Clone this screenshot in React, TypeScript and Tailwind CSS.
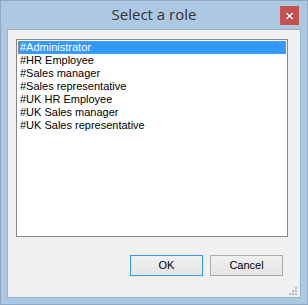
import { useState } from 'react';

const roles = [
  '#Administrator',
  '#HR Employee',
  '#Sales manager',
  '#Sales representative',
  '#UK HR Employee',
  '#UK Sales manager',
  '#UK Sales representative',
];

function SizeGrip() {
  // 3 rows of little square dots, stepped like a staircase
  const dots = [
    [6, 0],
    [3, 3],
    [6, 3],
    [0, 6],
    [3, 6],
    [6, 6],
  ];
  return (
    <svg width="9" height="9" viewBox="0 0 9 9" className="absolute right-[2px] bottom-[1px]">
      {dots.map(([x, y]) => (
        <rect key={`${x}-${y}`} x={x} y={y} width="2" height="2" fill="#b8b8b8" />
      ))}
    </svg>
  );
}

export default function App() {
  const [selected, setSelected] = useState(0);

  return (
    <div className="w-[308px] h-[305px] border border-[#8fa7c1] bg-[#adc8e2] flex flex-col">
      <div className="h-[28px] relative flex items-center justify-center">
        <span className="text-[15px] text-[#333333] leading-none -mt-[2px]" style={{ fontFamily: '"Open Sans", "Noto Sans", sans-serif' }}>
          Select a role
        </span>
        <button className="absolute right-[8px] top-[5px] w-[19px] h-[19px] bg-[#c75050] flex items-center justify-center">
          <svg width="7" height="6" viewBox="0 0 7 6">
            <path d="M0 0h2v1h1v1h1v-1h1v-1h2v1h-1v1h-1v2h1v1h1v1h-2v-1h-1v-1h-1v1h-1v1h-2v-1h1v-1h1v-2h-1v-1h-1z" fill="#fff" />
          </svg>
        </button>
      </div>
      <div className="mx-[6px] h-[269px] border border-[#9ab1cb] bg-[#f0f0f0] relative flex flex-col pt-[9px] px-[8px]">
        <div className="w-[272px] h-[198px] border border-[#828790] bg-white p-px">
          {roles.map((role, i) => (
            <div
              key={role}
              onClick={() => setSelected(i)}
              className={`h-[13px] pl-[2px] text-[11px] leading-[13px] whitespace-nowrap ${
                i === selected
                  ? 'bg-[#3399ff] text-white outline-1 outline-dotted outline-[#d9822b] -outline-offset-1'
                  : 'text-black'
              }`}
              style={{ fontFamily: '"Liberation Sans", Arial, sans-serif' }}
            >
              {role}
            </div>
          ))}
        </div>
        <div className="flex justify-end gap-[7px] mt-[18px] pr-[9px]">
          <button
            className="w-[73px] h-[21px] border border-[#3399ff] bg-gradient-to-b from-[#f0f0f0] to-[#e5e5e5] text-[11px] text-black"
            style={{ fontFamily: '"Liberation Sans", Arial, sans-serif' }}
          >
            OK
          </button>
          <button
            className="w-[73px] h-[21px] border border-[#acacac] bg-gradient-to-b from-[#f0f0f0] to-[#e5e5e5] text-[11px] text-black"
            style={{ fontFamily: '"Liberation Sans", Arial, sans-serif' }}
          >
            Cancel
          </button>
        </div>
        <SizeGrip />
      </div>
    </div>
  );
}
